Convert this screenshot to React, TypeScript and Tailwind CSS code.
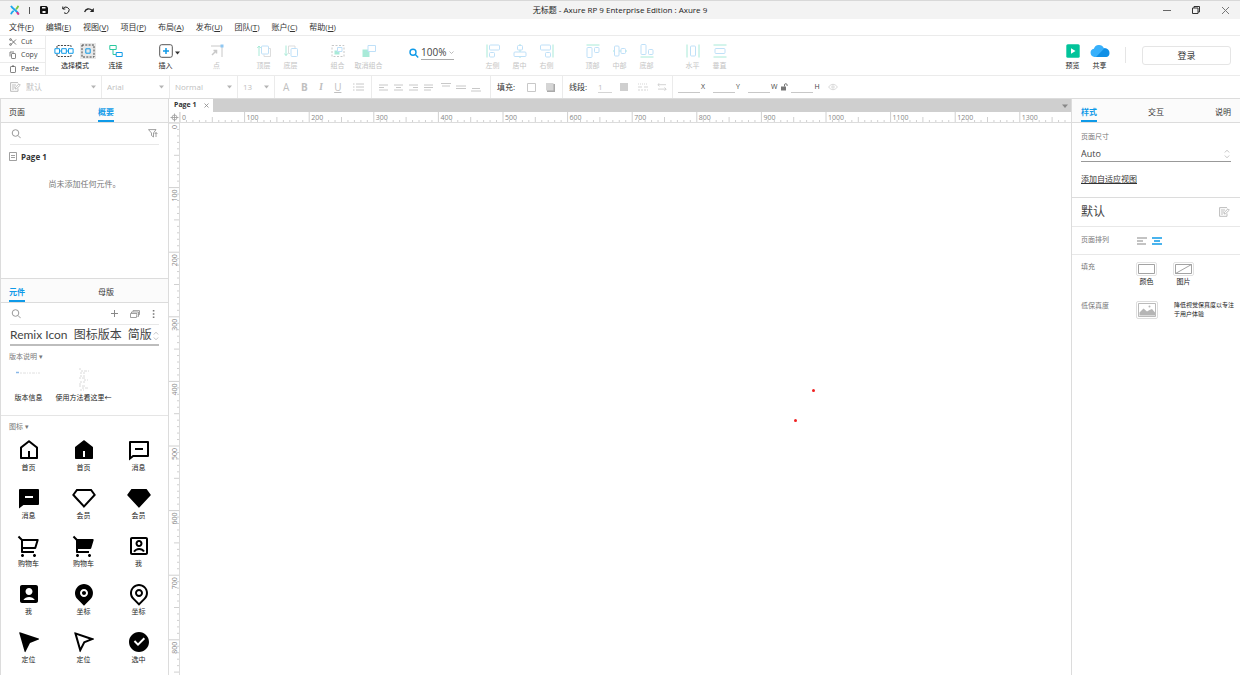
import { useEffect, useRef, useState } from "react";
import type { ReactNode } from "react";
import {
  RiAccountBoxFill,
  RiAccountBoxLine,
  RiCheckboxCircleFill,
  RiHome5Fill,
  RiHome5Line,
  RiMapPinFill,
  RiMapPinLine,
  RiNavigationFill,
  RiNavigationLine,
  RiShoppingCart2Fill,
  RiShoppingCart2Line,
  RiVipDiamondFill,
  RiVipDiamondLine,
} from "react-icons/ri";

const menus = [
  ["文件", "F"],
  ["编辑", "E"],
  ["视图", "V"],
  ["项目", "P"],
  ["布局", "A"],
  ["发布", "U"],
  ["团队", "T"],
  ["账户", "C"],
  ["帮助", "H"],
];

type WidgetIconProps = { size?: number; className?: string };

function MessageLine({ size, className }: WidgetIconProps) {
  return (
    <svg width={size} height={size} viewBox="0 0 24 24" fill="currentColor" className={className}>
      <path d="M6.455 19 2 22.500V4a1 1 0 0 1 1-1h18a1 1 0 0 1 1 1v14a1 1 0 0 1-1 1H6.455zm-.692-2H20V5H4v13.385L5.763 17zM8 10h8v2H8v-2z" />
    </svg>
  );
}

function MessageFill({ size, className }: WidgetIconProps) {
  return (
    <svg width={size} height={size} viewBox="0 0 24 24" fill="currentColor" className={className}>
      <path
        fillRule="evenodd"
        d="M6.455 19 2 22.500V4a1 1 0 0 1 1-1h18a1 1 0 0 1 1 1v14a1 1 0 0 1-1 1H6.455zM8 10v2h8v-2H8z"
      />
    </svg>
  );
}

const widgets = [
  { label: "首页", icon: RiHome5Line },
  { label: "首页", icon: RiHome5Fill },
  { label: "消息", icon: MessageLine },
  { label: "消息", icon: MessageFill },
  { label: "会员", icon: RiVipDiamondLine },
  { label: "会员", icon: RiVipDiamondFill },
  { label: "购物车", icon: RiShoppingCart2Line },
  { label: "购物车", icon: RiShoppingCart2Fill },
  { label: "我", icon: RiAccountBoxLine },
  { label: "我", icon: RiAccountBoxFill },
  { label: "坐标", icon: RiMapPinFill },
  { label: "坐标", icon: RiMapPinLine },
  { label: "定位", icon: RiNavigationFill },
  { label: "定位", icon: RiNavigationLine },
  { label: "选中", icon: RiCheckboxCircleFill },
];

const BLUE = "#0f9ae8";
const GREEN = "#2cc9a0";
const PALE_BLUE = "#bfe0f8";
const PALE_GREEN = "#a9ead8";
const GRAY = "#c8c8c8";

type IconProps = {
  w?: number;
  h?: number;
  color?: string;
  children: ReactNode;
};

function Icon({ w = 16, h = 16, color = GRAY, children }: IconProps) {
  return (
    <svg
      width={w}
      height={h}
      viewBox={`0 0 ${w} ${h}`}
      fill="none"
      stroke={color}
      className="shrink-0"
      aria-hidden="true"
    >
      {children}
    </svg>
  );
}

function Caret({ dark = false }: { dark?: boolean }) {
  return (
    <Icon w={5} h={4}>
      <path d="M0 .5h5L2.500 3.500z" fill={dark ? "#333" : "#b5b5b5"} stroke="none" />
    </Icon>
  );
}

function Stepper() {
  return (
    <Icon w={6} h={10} color="#b8b8b8">
      <path d="M.8 3.500 3 1.200l2.200 2.300M.8 6.500 3 8.800l2.200-2.300" strokeWidth=".8" />
    </Icon>
  );
}

function Search({ color = "#999" }: { color?: string }) {
  return (
    <Icon w={10} h={10} color={color}>
      <circle cx="4.500" cy="4" r="3.300" />
      <path d="m7 6.500 2.700 2.700" />
    </Icon>
  );
}

function EditIcon() {
  return (
    <Icon w={11} h={10} color="#b5b5b5">
      <path d="M8 6.500v2.800H.6V.6H8M2 3h4M2 5h3M2 7h2" strokeWidth=".9" />
      <path d="m5 7 .4-1.700L9 1.800l1.300 1.300-3.600 3.500z" strokeWidth=".9" />
    </Icon>
  );
}

/* toolbar ------------------------------------------------------------- */

type ToolProps = {
  label: string;
  wide?: boolean;
  active?: boolean;
  children: ReactNode;
};

function Tool({ label, wide, active, children }: ToolProps) {
  return (
    <button
      type="button"
      disabled={!active}
      className={`flex flex-col items-center gap-[2px] text-[7px] leading-[10px] whitespace-nowrap ${
        wide ? "w-[31px]" : "w-[27px]"
      } ${active ? "text-[#222]" : "text-[#c4c4c4]"}`}
    >
      <span className="flex h-4 items-center">{children}</span>
      {label}
    </button>
  );
}

function Toolbar() {
  return (
    <div className="flex h-[41px] shrink-0 border-y border-[#ebebeb]">
      <div className="flex w-[46px] shrink-0 flex-col border-r border-[#ebebeb] text-[7px] text-[#444]">
        <button type="button" className="flex flex-1 items-center gap-1 border-b border-[#ebebeb] pl-[9px]">
          <Icon w={8} h={8} color="#555">
            <path d="M2 1.500 7 6.500M2 6.500 7 1.500" strokeWidth=".8" />
            <circle cx="1.500" cy="1.500" r=".9" strokeWidth=".7" />
            <circle cx="1.500" cy="6.500" r=".9" strokeWidth=".7" />
          </Icon>
          Cut
        </button>
        <button type="button" className="flex flex-1 items-center gap-1 border-b border-[#ebebeb] pl-[9px]">
          <Icon w={8} h={8} color="#666">
            <rect x="2.500" y="2.500" width="4" height="5" rx=".6" strokeWidth=".8" />
            <path d="M1 5.500V1h4" strokeWidth=".8" />
          </Icon>
          Copy
        </button>
        <button type="button" className="flex flex-1 items-center gap-1 pl-[9px]">
          <Icon w={8} h={8} color="#666">
            <rect x="1.500" y="1.500" width="5" height="6" rx=".6" strokeWidth=".8" />
            <path d="M3 1.200h2" strokeWidth="1.200" />
          </Icon>
          Paste
        </button>
      </div>

      <div className="flex flex-1 items-start pt-[7px]">
        <button type="button" className="ml-2 flex flex-col items-center gap-[2px] text-[7px] leading-[10px] text-[#222]">
          <span className="flex h-4 items-center gap-[6px]">
            <Icon w={20} h={16} color="#444">
              <path d="M3 5V2.500h14V5M3 11v2.500h14V11" strokeDasharray="2 1.200" />
              <path d="M.9 5.700h4.600v4.600H.9zM7.700 5.700h4.600v4.600H7.700zM14.500 5.700h4.600v4.600h-4.600z" stroke={BLUE} />
              <path d="M5.500 8h2.200M12.300 8h2.200" stroke={BLUE} />
            </Icon>
            <Icon color="#444">
              <path d="M0 0h16v16H0z" fill="#e8e8e8" stroke="none" />
              <path d="M2 2h12v12H2z" strokeDasharray="2 1.300" />
              <path d="M5.800 5.800h4.400v4.400H5.800z" stroke={BLUE} />
            </Icon>
          </span>
          选择模式
        </button>
        <div className="ml-[6px]">
          <Tool label="连接" active>
            <Icon w={14} h={14} color={GREEN}>
              <path d="M.8 1.500h6.400v4H.8zM4 5.500v5h3" />
              <path d="M7.200 8.500h6v4h-6z" stroke={BLUE} />
            </Icon>
          </Tool>
        </div>
        <div className="ml-[23px] flex items-start">
          <Tool label="插入" active>
            <Icon w={14} h={14} color="#555">
              <rect x=".7" y=".7" width="12.600" height="12.600" rx="2" />
              <path d="M7 4v6M4 7h6" stroke={BLUE} strokeWidth="1.500" />
            </Icon>
          </Tool>
          <span className="-ml-1 pt-2">
            <Caret dark />
          </span>
        </div>
        <div className="ml-[23px]">
          <Tool label="点">
            <Icon w={14} h={14}>
              <path d="M1 2h11v11" />
              <path d="m2 11 4-4M3.500 6.500h3v3" strokeWidth="1.500" />
              <path d="M10.500.5h3v3h-3z" fill="#8fc7f2" stroke="none" />
            </Icon>
          </Tool>
        </div>

        <div className="ml-[20px] flex">
          <Tool label="顶层">
            <Icon w={14} h={14} color={PALE_BLUE}>
              <path d="M2 12V2M.3 4 2 2l1.700 2" stroke={PALE_GREEN} />
              <path d="M7 10.500v2h6.500v-8h-2" stroke="#ddd" />
              <rect x="4.500" y="2" width="7" height="8" rx="1" />
            </Icon>
          </Tool>
          <Tool label="底层">
            <Icon w={14} h={14} color={PALE_BLUE}>
              <path d="M2 1.500v10M.3 9.500l1.700 2 1.700-2" stroke={PALE_GREEN} />
              <path d="M6 9.500H4.500V2H11v2" stroke="#ddd" />
              <rect x="7" y="4.500" width="6.500" height="8" rx="1" />
            </Icon>
          </Tool>
        </div>
        <div className="ml-[18px] flex">
          <Tool label="组合" wide>
            <Icon w={14} h={14}>
              <path d="M1 1.500h12v11H1z" strokeDasharray="2 1.500" />
              <path d="M3.500 6.500h5v4h-5z" fill={PALE_GREEN} stroke="none" />
              <path d="M6.500 3.500H11v4H6.500z" fill="#fff" stroke={PALE_BLUE} />
            </Icon>
          </Tool>
          <Tool label="取消组合" wide>
            <Icon w={14} h={14}>
              <path d="M.5 5.500h7v7.500h-7z" fill={PALE_GREEN} stroke="none" />
              <path d="M6 1.500h7.500v6H6z" fill="#fff" stroke={PALE_BLUE} />
            </Icon>
          </Tool>
        </div>

        <div className="ml-[25px] flex items-center gap-[2px] pt-[2px]">
          <Icon w={10} h={10} color={BLUE}>
            <circle cx="4" cy="4.200" r="3" strokeWidth="1.400" />
            <path d="m6.400 6.600 2.800 2.800" strokeWidth="1.400" />
          </Icon>
          <label className="flex items-center border-b border-[#aaa]">
            <input
              aria-label="Zoom"
              defaultValue="100%"
              className="h-[14px] w-7 text-[10px] leading-[14px] text-[#444] outline-none"
            />
            <Icon w={5} h={5} color="#aaa">
              <path d="m.5 1.500 2 2 2-2" strokeWidth=".8" />
            </Icon>
          </label>
        </div>

        <div className="ml-[25px] flex">
          <Tool label="左侧">
            <Icon w={14} h={14} color={PALE_BLUE}>
              <path d="M1 .5v13" stroke={PALE_GREEN} />
              <rect x="3.500" y="1" width="10" height="5" rx="1" />
              <rect x="3.500" y="8.500" width="5" height="4.500" rx="1" />
            </Icon>
          </Tool>
          <Tool label="居中">
            <Icon w={14} h={14} color={PALE_BLUE}>
              <path d="M7 0v1.500M7 6v2M7 12.500V14" stroke={PALE_GREEN} />
              <rect x="4.500" y="1.500" width="5" height="4.500" rx="1" />
              <rect x="1" y="8" width="12" height="4.500" rx="1" />
            </Icon>
          </Tool>
          <Tool label="右侧">
            <Icon w={14} h={14} color={PALE_BLUE}>
              <path d="M13 .5v13" stroke={PALE_GREEN} />
              <rect x=".5" y="1" width="10" height="5" rx="1" />
              <rect x="5.500" y="8.500" width="5" height="4.500" rx="1" />
            </Icon>
          </Tool>
        </div>
        <div className="ml-[19px] flex">
          <Tool label="顶部">
            <Icon w={14} h={14} color={PALE_BLUE}>
              <path d="M.5 1h13" stroke={PALE_GREEN} />
              <rect x="1" y="3.500" width="5" height="10" rx="1" />
              <rect x="8.500" y="3.500" width="4.500" height="5" rx="1" />
            </Icon>
          </Tool>
          <Tool label="中部">
            <Icon w={14} h={14} color={PALE_BLUE}>
              <path d="M0 7h1.500M6 7h2M12.500 7H14" stroke={PALE_GREEN} />
              <rect x="1.500" y="2" width="4.500" height="10" rx="1" />
              <rect x="8" y="4.500" width="4.500" height="5" rx="1" />
            </Icon>
          </Tool>
          <Tool label="底部">
            <Icon w={14} h={14} color={PALE_BLUE}>
              <path d="M.5 13h13" stroke={PALE_GREEN} />
              <rect x="1" y=".5" width="5" height="10" rx="1" />
              <rect x="8.500" y="5.500" width="4.500" height="5" rx="1" />
            </Icon>
          </Tool>
        </div>
        <div className="ml-[19px] flex">
          <Tool label="水平">
            <Icon w={14} h={14} color={PALE_BLUE}>
              <path d="M1 .5v13M13 .5v13" stroke={PALE_GREEN} />
              <rect x="4.500" y="2" width="5" height="10" rx="1" />
            </Icon>
          </Tool>
          <Tool label="垂直">
            <Icon w={14} h={14} color={PALE_BLUE}>
              <path d="M.5 1h13M.5 13h13" stroke={PALE_GREEN} />
              <rect x="2" y="4.500" width="10" height="5" rx="1" />
            </Icon>
          </Tool>
        </div>

        <div className="ml-auto flex items-start pr-[9px]">
          <Tool label="预览" active>
            <Icon w={14} h={14}>
              <rect x=".3" y=".3" width="13.400" height="13.400" rx="1.500" fill="#02c39a" stroke="none" />
              <path d="M5 4.300v5.400L9.500 7z" fill="#fff" stroke="none" />
            </Icon>
          </Tool>
          <Tool label="共享" active>
            <Icon w={20} h={14}>
              <path d="M4.500 13a4.200 4.200 0 0 1-.6-8.300A5.300 5.300 0 0 1 13.800 4 5 5 0 0 1 16 13z" fill="#37b0fb" stroke="none" />
              <path d="M6 13 14.500 4.300A4.600 4.600 0 0 1 19.500 9c0 2.500-1.500 4-3.500 4z" fill="#0f8fe6" stroke="none" />
            </Icon>
          </Tool>
          <span className="mt-1 ml-3 h-4 w-px bg-[#e5e5e5]" />
          <button
            type="button"
            className="mt-[3px] ml-[16px] h-[19px] w-[89px] rounded-[3px] border border-[#e5e5e5] text-[9px] leading-[17px] text-[#333]"
          >
            登录
          </button>
        </div>
      </div>
    </div>
  );
}

/* style bar ----------------------------------------------------------- */

function StyleSelect({ label, value, width }: { label: string; value: string; width: string }) {
  return (
    <label className={`flex items-center border-r border-[#ebebeb] pr-[5px] pl-[5px] ${width}`}>
      <select
        aria-label={label}
        disabled
        className="h-4 min-w-0 flex-1 appearance-none text-[8px] leading-4 text-[#c0c0c0] opacity-100"
      >
        <option>{value}</option>
      </select>
      <Caret />
    </label>
  );
}

function IconButton({ label, children }: { label: string; children: ReactNode }) {
  return (
    <button type="button" aria-label={label} className="flex h-4 items-center">
      {children}
    </button>
  );
}

function NumberField({ name }: { name: string }) {
  return (
    <label className="flex items-center gap-px text-[7px] text-[#444]">
      <input className="h-3 w-[22px] border-b border-[#c8c8c8] outline-none" />
      {name}
    </label>
  );
}

const textAligns = [
  { label: "Align left", d: "M0 1h9M0 3.500h5M0 6h9" },
  { label: "Align center", d: "M0 1h9M2 3.500h5M0 6h9" },
  { label: "Align right", d: "M0 1h9M4 3.500h5M0 6h9" },
  { label: "Justify", d: "M0 1h9M0 3.500h9M0 6h7" },
];

function StyleBar() {
  return (
    <div className="flex h-[22px] shrink-0 items-stretch text-[#c0c0c0]">
      <div className="flex items-center pl-[10px]">
        <EditIcon />
      </div>
      <StyleSelect label="Style" value="默认" width="w-[81px]" />
      <StyleSelect label="Font" value="Arial" width="w-[68px]" />
      <StyleSelect label="Weight" value="Normal" width="w-[68px]" />
      <StyleSelect label="Size" value="13" width="w-[37px]" />

      <div className="flex w-[97px] items-center justify-between border-r border-[#ebebeb] pr-[7px] pl-[8px] text-[10px]">
        <button type="button">A</button>
        <button type="button" className="font-bold">B</button>
        <button type="button" className="font-serif font-bold italic">I</button>
        <button type="button" className="underline">U</button>
        <IconButton label="Bullets">
          <Icon w={11} h={8}>
            <path d="M0 1h1.500M3 1h8M0 4h1.500M3 4h8M0 7h1.500M3 7h8" />
          </Icon>
        </IconButton>
      </div>

      <div className="flex w-[119px] items-center border-r border-[#ebebeb] pl-[7px]">
        <div className="flex gap-[6px]">
          {textAligns.map((a) => (
            <IconButton key={a.label} label={a.label}>
              <Icon w={9} h={7}>
                <path d={a.d} />
              </Icon>
            </IconButton>
          ))}
        </div>
        <div className="ml-2 flex gap-[5px]">
          <IconButton label="Top">
            <Icon w={10} h={12}>
              <path d="M0 2.500h10M1 5h8" />
            </Icon>
          </IconButton>
          <IconButton label="Middle">
            <Icon w={10} h={12}>
              <path d="M0 5h10M0 7.500h10" />
            </Icon>
          </IconButton>
          <IconButton label="Bottom">
            <Icon w={10} h={12}>
              <path d="M1 7.500h8M0 10h10" />
            </Icon>
          </IconButton>
        </div>
      </div>

      <div className="flex w-[72px] items-center border-r border-[#ebebeb] pl-[6px]">
        <span className="w-[30px] text-[8px] text-[#333]">填充:</span>
        <IconButton label="Fill">
          <Icon w={9} h={9}>
            <path d="M.5.5h8v8h-8z" />
          </Icon>
        </IconButton>
        <span className="ml-[10px]">
          <IconButton label="Shadow">
            <Icon w={9} h={9}>
              <path d="M1 1h8v8H1z" fill="#aaa" stroke="none" />
              <path d="M0 0h7.500v7.500H0z" fill="#d5d5d5" stroke="none" />
            </Icon>
          </IconButton>
        </span>
      </div>

      <div className="flex w-[110px] items-center border-r border-[#ebebeb] pl-[6px]">
        <label className="flex items-center text-[8px] text-[#333]">
          <span className="w-[29px]">线段:</span>
          <input
            defaultValue="1"
            className="h-3 w-[14px] border-b border-[#d5d5d5] text-[8px] text-[#c0c0c0] outline-none"
          />
        </label>
        <div className="ml-2 flex gap-[9px]">
          <IconButton label="Line color">
            <Icon w={9} h={8}>
              <path d="M0 0h8v8H0z" fill="#cfcfcf" stroke="none" />
            </Icon>
          </IconButton>
          <IconButton label="Line style">
            <Icon w={10} h={8} color="#d5d5d5">
              <path d="M0 1h10" strokeDasharray="1 1" />
              <path d="M0 4h10" strokeDasharray="4 2" />
              <path d="M0 7h10" strokeDasharray="2 1" />
            </Icon>
          </IconButton>
          <IconButton label="Arrows">
            <Icon w={10} h={8}>
              <path d="M2.500 0 .8 1.700l1.700 1.600M1 1.700h8M7.500 4.500l1.700 1.600-1.700 1.700M1 6.100h8" strokeWidth=".8" />
            </Icon>
          </IconButton>
        </div>
      </div>

      <div className="flex items-center gap-2 pl-[5px]">
        <NumberField name="X" />
        <NumberField name="Y" />
        <div className="flex items-center gap-[3px]">
          <NumberField name="W" />
          <IconButton label="Lock ratio">
            <Icon w={8} h={8}>
              <path d="M1 3.500h5v4H1z" fill="#777" stroke="none" />
              <path d="M4.500 3.500V2a1.300 1.300 0 0 1 2.600 0v1" stroke="#777" />
            </Icon>
          </IconButton>
          <NumberField name="H" />
        </div>
        <IconButton label="Visibility">
          <Icon w={10} h={8} color="#d8d8d8">
            <path d="M.5 4Q5-1.500 9.500 4 5 9.500.5 4z" />
            <circle cx="5" cy="4" r="1.200" />
          </Icon>
        </IconButton>
      </div>
    </div>
  );
}

/* panels -------------------------------------------------------------- */

function Tabs({ items, active, spread }: { items: string[]; active: string; spread?: boolean }) {
  return (
    <div
      className={`flex h-6 shrink-0 items-stretch border-b border-[#dcdcdc] bg-[#fbfbfb] text-[8px] ${
        spread ? "justify-between px-[9px]" : "gap-[73px] px-2"
      }`}
    >
      {items.map((item) => (
        <button
          key={item}
          type="button"
          className={`border-b-2 pt-[4px] ${
            item === active ? "border-[#0f9ae8] font-bold text-[#0f9ae8]" : "border-transparent text-[#333]"
          }`}
        >
          {item}
        </button>
      ))}
    </div>
  );
}

function SearchRow({ label, children }: { label: string; children: ReactNode }) {
  return (
    <div className="mx-[9px] flex h-[22px] shrink-0 items-center border-b border-[#e8e8e8] pl-px">
      <Search />
      <input aria-label={label} className="min-w-0 flex-1 px-1 text-[8px] outline-none" />
      {children}
    </div>
  );
}

function LeftPanel() {
  return (
    <aside className="flex w-[169px] shrink-0 flex-col border-x border-[#dcdcdc]">
      <section className="flex h-[180px] shrink-0 flex-col border-b border-[#dcdcdc]">
        <Tabs items={["页面", "概要"]} active="概要" />
        <SearchRow label="Search pages">
          <button type="button" aria-label="Filter" className="mr-px">
            <Icon w={10} h={9} color="#888">
              <path d="M.5.600h7.500L5.500 4v4L3.500 6.500V4zM8 8V3.500M6.700 5 8 3.500 9.400 5" strokeWidth=".8" />
            </Icon>
          </button>
        </SearchRow>
        <div className="flex h-[23px] items-center gap-[4px] pl-2 text-[8px] font-bold text-[#333]">
          <Icon w={8} h={9} color="#888">
            <path d="M.5.500h7v8h-7zM2 3.500h4M2 5.500h4" strokeWidth=".8" />
          </Icon>
          Page 1
        </div>
        <p className="pt-[10px] text-center text-[8px] leading-3 text-[#777]">尚未添加任何元件。</p>
      </section>

      <section className="flex min-h-0 flex-1 flex-col overflow-hidden">
        <Tabs items={["元件", "母版"]} active="元件" />
        <SearchRow label="Search widgets">
          <div className="flex items-center gap-3 pr-[4px]">
            <button type="button" aria-label="Add library">
              <Icon w={7} h={7} color="#888">
                <path d="M3.500 0v7M0 3.500h7" />
              </Icon>
            </button>
            <button type="button" aria-label="Libraries">
              <Icon w={10} h={8} color="#888">
                <path d="M.5 3.500h6.500l-.6 4H.5zM1.500 3V2h7v4.500H7.500M3 1.700V.6h6.500v4h-1" strokeWidth=".8" />
              </Icon>
            </button>
            <button type="button" aria-label="More">
              <Icon w={3} h={8}>
                <path d="M.8 0h1.600v1.600H.8zM.8 3.200h1.600v1.600H.8zM.8 6.400h1.600V8H.8z" fill="#777" stroke="none" />
              </Icon>
            </button>
          </div>
        </SearchRow>
        <label className="mx-[9px] flex h-[21px] shrink-0 items-end border-b-2 border-[#bdbdbd]">
          <select
            aria-label="Library"
            className="h-[18px] min-w-0 flex-1 appearance-none font-['Lato','Noto_Sans_CJK_SC',sans-serif] text-[12px] leading-[18px] text-[#444]"
          >
            <option>Remix Icon&nbsp; 图标版本&nbsp; 简版</option>
          </select>
          <span className="pb-[3px]">
            <Stepper />
          </span>
        </label>

        <div className="shrink-0 border-b border-[#e5e5e5] pt-[6px] pb-3">
          <h3 className="px-2 text-[7px] leading-[10px] text-[#777]">版本说明 ▾</h3>
          <div className="grid grid-cols-3 pr-[2px] text-center text-[7px] leading-[10px] text-[#222]">
            <div className="flex flex-col items-center gap-[2px] pt-[5px]">
              <Icon w={25} h={24} color="#d8d8d8">
                <path d="M4 6h20" strokeDasharray="2 1 3 1 1 1" strokeWidth=".8" />
                <path d="M0 5.500h3" stroke="#8ab8e8" strokeWidth="1.500" />
              </Icon>
              版本信息
            </div>
            <div className="flex flex-col items-center gap-[2px] pt-[5px] whitespace-nowrap">
              <Icon w={12} h={24} color="#d0d0d0">
                <path
                  d="M1 2h3M3 4h8M2 6h5M2 9h5M1 11h7M6 13h4M2 15h5M1 17h3M1 19h6M4 21h7M2 23h4"
                  strokeDasharray="2 1 3 1"
                  strokeWidth=".8"
                />
              </Icon>
              使用方法看这里←
            </div>
          </div>
        </div>

        <h3 className="px-2 pt-[6px] text-[7px] leading-[10px] text-[#777]">图标 ▾</h3>
        <div className="grid grid-cols-3 pt-[6px] pr-[2px]">
          {widgets.map(({ label, icon: WidgetIcon }, i) => (
            <div key={i} className="flex h-12 flex-col items-center gap-px text-[7px] leading-[10px] text-[#222]">
              <WidgetIcon size={24} className="shrink-0 text-black" />
              {label}
            </div>
          ))}
        </div>
      </section>
    </aside>
  );
}

function RightPanel() {
  return (
    <aside className="flex w-[169px] shrink-0 flex-col border-l border-[#dcdcdc] text-[7px] text-[#777]">
      <Tabs items={["样式", "交互", "说明"]} active="样式" spread />

      <section className="h-[75px] shrink-0 border-b border-[#dcdcdc] px-[9px] pt-[9px]">
        <label className="block">
          <span className="block leading-[10px]">页面尺寸</span>
          <span className="mt-1 flex h-4 items-center border-b border-[#999] pr-[1px]">
            <select className="h-[15px] flex-1 appearance-none text-[9px] leading-[15px] text-[#444]">
              <option>Auto</option>
            </select>
            <Stepper />
          </span>
        </label>
        <a href="#adaptive" className="mt-[11px] block text-[8px] leading-3 text-[#333] underline">
          添加自适应视图
        </a>
      </section>

      <div className="flex h-[29px] shrink-0 items-center justify-between border-b border-[#e8e8e8] pr-[10px] pl-[9px]">
        <h2 className="text-[12px] text-[#444]">默认</h2>
        <button type="button" aria-label="Edit style">
          <EditIcon />
        </button>
      </div>

      <div className="flex h-7 shrink-0 items-center border-b border-[#e8e8e8] pl-[9px]">
        <span className="w-[56px]">页面排列</span>
        <div className="flex gap-[5px]">
          <IconButton label="Align page left">
            <Icon w={10} h={8} color="#888">
              <path d="M0 1h10M0 4h6M0 7h9" strokeWidth="1.200" />
            </Icon>
          </IconButton>
          <IconButton label="Align page center">
            <Icon w={10} h={8} color={BLUE}>
              <path d="M0 1h10M2 4h6M0 7h10" strokeWidth="1.500" />
            </Icon>
          </IconButton>
        </div>
      </div>

      <div className="flex items-start pt-[7px] pl-[9px]">
        <span className="w-[55px] leading-[10px]">填充</span>
        <div className="flex gap-4 leading-[10px] text-[#222]">
          <button type="button" className="flex w-[21px] flex-col items-center gap-px">
            <Icon w={21} h={14} color="#999">
              <rect x=".5" y=".5" width="20" height="13" rx="1.500" stroke="#e2e2e2" />
              <path d="M2.500 2.500h16v9h-16z" strokeWidth=".9" />
            </Icon>
            颜色
          </button>
          <button type="button" className="flex w-[21px] flex-col items-center gap-px">
            <Icon w={21} h={14} color="#999">
              <rect x=".5" y=".5" width="20" height="13" rx="1.500" stroke="#e2e2e2" />
              <path d="M2.500 2.500h16v9h-16zM2.500 11.500l16-9" strokeWidth=".9" />
            </Icon>
            图片
          </button>
        </div>
      </div>

      <div className="flex items-start pt-[14px] pl-[9px]">
        <span className="w-[55px] leading-[10px]">低保真度</span>
        <button type="button" aria-label="Low fidelity">
          <Icon w={22} h={18} color="#aaa">
            <rect x=".5" y=".5" width="21" height="17" rx="1.500" stroke="#ddd" />
            <path d="M2.500 2.500h17v13h-17z" strokeWidth=".8" />
            <path d="m3.500 14.500v-3l4-4 3.500 3 2.500-1.500 2.500-1 3 3.500v3z" fill="#b5b5b5" stroke="none" />
            <circle cx="13.500" cy="5.500" r="1" fill="#b5b5b5" stroke="none" />
          </Icon>
        </button>
        <p className="ml-4 text-[6px] leading-[9px] text-[#222]">
          降低视觉保真度以专注
          <br />
          于用户体验
        </p>
      </div>
    </aside>
  );
}

/* canvas -------------------------------------------------------------- */

const STEP = 6.46; // ten canvas units at the current zoom

function tickStart(i: number) {
  if (i % 10 === 0) return 0;
  return i % 5 === 0 ? 5 : 8;
}

function useTicks(side: "width" | "height") {
  const ref = useRef<SVGSVGElement>(null);
  const [length, setLength] = useState(0);

  useEffect(() => {
    const measure = () => setLength(ref.current?.getBoundingClientRect()[side] ?? 0);

    measure();
    window.addEventListener("resize", measure);

    return () => window.removeEventListener("resize", measure);
  }, [side]);

  const ticks = Array.from({ length: Math.ceil(length / STEP) }, (_, i) => i);
  const labels = ticks.filter((i) => i % 10 === 0 && i * STEP + 22 < length);

  return { ref, ticks, labels };
}

function HorizontalRuler() {
  const { ref, ticks, labels } = useTicks("width");

  return (
    <svg ref={ref} className="h-[11px] min-w-0 flex-1 border-b border-[#dcdcdc]" aria-hidden="true">
      {ticks.map((i) => (
        <line key={i} x1={i * STEP} x2={i * STEP} y1={tickStart(i)} y2="11" stroke="#d0d0d0" />
      ))}
      {labels.map((i) => (
        <text key={i} x={i * STEP + 2} y="8" fontSize="7" fill="#888">
          {i * 10}
        </text>
      ))}
    </svg>
  );
}

function VerticalRuler() {
  const { ref, ticks, labels } = useTicks("height");

  return (
    <svg ref={ref} className="h-full w-[11px] shrink-0 border-r border-[#dcdcdc]" aria-hidden="true">
      {ticks.map((i) => (
        <line key={i} y1={i * STEP} y2={i * STEP} x1={tickStart(i)} x2="11" stroke="#d0d0d0" />
      ))}
      {labels.map((i) => (
        <text
          key={i}
          transform={`translate(8 ${i * STEP + 2}) rotate(-90)`}
          textAnchor="end"
          fontSize="7"
          fill="#888"
        >
          {i * 10}
        </text>
      ))}
    </svg>
  );
}

function Canvas() {
  return (
    <main className="flex min-w-0 flex-1 flex-col">
      <div className="flex h-[13px] shrink-0 items-stretch bg-[#cfcfcf]">
        <div className="flex w-11 items-center justify-between bg-white pr-1 pl-[5px] text-[7px] font-bold text-[#333]">
          Page 1
          <button type="button" aria-label="Close page">
            <Icon w={5} h={5} color="#888">
              <path d="m.5.500 4 4M4.500.500l-4 4" strokeWidth=".8" />
            </Icon>
          </button>
        </div>
        <button type="button" aria-label="All pages" className="mr-[3px] ml-auto">
          <Icon w={6} h={4}>
            <path d="M0 .5h6L3 4z" fill="#888" stroke="none" />
          </Icon>
        </button>
      </div>
      <div className="flex shrink-0">
        <div className="flex h-[11px] w-[11px] items-center justify-center border-r border-b border-[#dcdcdc]">
          <Icon w={9} h={9} color="#999">
            <circle cx="4.500" cy="4.500" r="2.500" strokeWidth=".8" />
            <path d="M4.500.5v8M.5 4.500h8" strokeWidth=".8" />
          </Icon>
        </div>
        <HorizontalRuler />
      </div>
      <div className="flex min-h-0 flex-1">
        <VerticalRuler />
        <div className="relative flex-1 bg-white">
          <span className="absolute top-[266px] left-[632px] size-[3px] rounded-full bg-[#f02020]" />
          <span className="absolute top-[296px] left-[614px] size-[3px] rounded-full bg-[#f02020]" />
        </div>
      </div>
    </main>
  );
}

function TitleBar() {
  return (
    <header className="flex h-[19px] shrink-0 items-center border-t border-[#d8d8d8] bg-[#f3f3f3] text-[8px] text-[#222]">
      <div className="flex flex-1 items-center pl-[10px]">
        <Icon w={10} h={10}>
          <path d="M1 .8C2.500 4 7.500 6 8.500 9.200" stroke="#1aa7ee" strokeWidth="1.800" />
          <path d="M1 9.200C1.500 7.500 2.500 6.500 3.700 5.700" stroke="#1aa7ee" strokeWidth="1.800" />
          <path d="M6 4.200C7.200 3.200 8 2.200 8.300.8" stroke="#7ac943" strokeWidth="1.800" />
          <path d="M6.800 7.200 8.800 9.600" stroke="#e6318b" strokeWidth="1.800" />
        </Icon>
        <span className="ml-[9px] h-[7px] w-px bg-[#555]" />
        <div className="ml-[10px] flex items-center gap-[14px]">
          <button type="button" aria-label="Save">
            <Icon w={8} h={8}>
              <path d="M0 1a1 1 0 0 1 1-1h5.500L8 1.500V7a1 1 0 0 1-1 1H1a1 1 0 0 1-1-1z" fill="#111" stroke="none" />
              <path d="M2 1h3.500v1.500H2zM2.500 5h3v2h-3z" fill="#f3f3f3" stroke="none" />
            </Icon>
          </button>
          <button type="button" aria-label="Undo">
            <Icon w={8} h={8} color="#222">
              <path d="M.8.500v2.500h2.500M1 2.900A3.200 3.200 0 1 1 2 6.800" />
            </Icon>
          </button>
          <button type="button" aria-label="Redo">
            <Icon w={10} h={8} color="#222">
              <path d="M.6 6C2 2.500 5 2 8.500 4.500" strokeWidth="1.300" />
              <path d="M9.800 2v4H5.800z" fill="#222" stroke="none" />
            </Icon>
          </button>
        </div>
      </div>
      <h1>无标题 - Axure RP 9 Enterprise Edition : Axure 9</h1>
      <div className="flex flex-1 items-center justify-end gap-[21px] pr-[10px]">
        <button type="button" aria-label="Minimize">
          <Icon w={8} h={8} color="#666">
            <path d="M0 4.500h8" />
          </Icon>
        </button>
        <button type="button" aria-label="Restore">
          <Icon w={8} h={8} color="#333">
            <path d="M.5 2h5.500v5.500H.5zM2 2V.5h5.500V6H6" />
          </Icon>
        </button>
        <button type="button" aria-label="Close">
          <Icon w={9} h={9} color="#777">
            <path d="m1 1 7 7M8 1 1 8" />
          </Icon>
        </button>
      </div>
    </header>
  );
}

export default function App() {
  return (
    <div className="flex h-screen flex-col overflow-hidden bg-white font-['Open_Sans','Noto_Sans_CJK_SC',sans-serif]">
      <TitleBar />
      <nav className="flex h-4 shrink-0 items-center gap-3 pl-[9px] text-[8px] text-[#333]">
        {menus.map(([name, key]) => (
          <button key={key} type="button">
            {name}(<u>{key}</u>)
          </button>
        ))}
      </nav>
      <Toolbar />
      <StyleBar />
      <div className="flex min-h-0 flex-1 border-t border-[#dcdcdc]">
        <LeftPanel />
        <Canvas />
        <RightPanel />
      </div>
    </div>
  );
}
